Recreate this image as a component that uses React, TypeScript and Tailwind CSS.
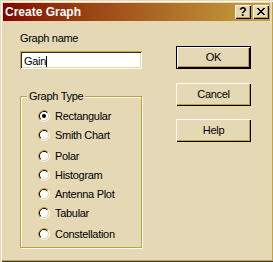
import React from 'react';

const face = 'bg-[#e4d8b5]';

function Radio({ checked }: { checked?: boolean }) {
  return (
    <svg width="12" height="12" viewBox="0 0 12 12" className="shrink-0">
      <circle cx="6" cy="6" r="5.5" fill="none" stroke="#fffbf0" />
      <path d="M2.11 9.89 A5.5 5.5 0 0 1 9.89 2.11" fill="none" stroke="#b8952f" />
      <circle cx="6" cy="6" r="4.5" fill="none" stroke="#e4d8b5" />
      <path d="M2.82 9.18 A4.5 4.5 0 0 1 9.18 2.82" fill="none" stroke="#000000" strokeWidth="1.2" />
      <circle cx="6" cy="6" r="3.9" fill="#ffffff" />
      {checked && <circle cx="6" cy="6" r="2" fill="#000000" />}
    </svg>
  );
}

function Button({ label, isDefault }: { label: string; isDefault?: boolean }) {
  const bevel =
    'shadow-[inset_1px_1px_0_#fffbf0,inset_-1px_-1px_0_#000000,inset_-2px_-2px_0_#c4a03c]';
  if (isDefault) {
    return (
      <div className="w-[75px] h-[23px] border border-black">
        <div className={`w-full h-full flex items-center justify-center ${bevel}`}>{label}</div>
      </div>
    );
  }
  return (
    <div className={`w-[75px] h-[23px] flex items-center justify-center ${bevel}`}>{label}</div>
  );
}

export default function App() {
  const types = [
    { name: 'Rectangular', mt: 'mt-0', checked: true },
    { name: 'Smith Chart', mt: 'mt-[7px]' },
    { name: 'Polar', mt: 'mt-[9px]' },
    { name: 'Histogram', mt: 'mt-[7px]' },
    { name: 'Antenna Plot', mt: 'mt-[7px]' },
    { name: 'Tabular', mt: 'mt-[7px]' },
    { name: 'Constellation', mt: 'mt-[9px]' },
  ];

  return (
    <div
      className={`w-[273px] h-[262px] ${face} p-[3px] flex flex-col text-black text-[11px] leading-[13px] tracking-[-0.3px] shadow-[inset_1px_1px_0_#e4d8b5,inset_2px_2px_0_#fffbf0,inset_0_-1px_0_#404040,inset_-1px_-2px_0_#c4a03c] overflow-hidden`}
      style={{ fontFamily: '"Liberation Sans", Arial, sans-serif' }}
    >
      {/* Title bar */}
      <div className="h-[18px] flex items-center justify-between pl-[2px] pr-[1px] bg-gradient-to-r from-[#800000] to-[#c6a440]">
        <span className="text-white font-bold text-[12px] leading-[18px] tracking-normal">Create Graph</span>
        <div className="flex gap-[2px]">
          <div
            className={`w-[16px] h-[14px] ${face} flex items-center justify-center font-bold text-[12px] leading-none tracking-normal shadow-[inset_1px_1px_0_#fffbf0,inset_-1px_-1px_0_#000000,inset_-2px_-2px_0_#c4a03c]`}
          >
            ?
          </div>
          <div
            className={`w-[16px] h-[14px] ${face} flex items-center justify-center shadow-[inset_1px_1px_0_#fffbf0,inset_-1px_-1px_0_#000000,inset_-2px_-2px_0_#c4a03c]`}
          >
            <svg width="8" height="7" viewBox="0 0 8 7" className="-mt-[1px] -ml-[1px]">
              <path d="M0 0 L7 7 M1 0 L8 7 M7 0 L0 7 M8 0 L1 7" stroke="#000" strokeWidth="1" />
            </svg>
          </div>
        </div>
      </div>

      {/* Client area */}
      <div className="flex pl-[17px]">
        <div className="w-[122px] flex flex-col pt-[11px]">
          <span>Graph name</span>
          <div className="mt-[6px] h-[18px] bg-white flex items-start pl-[4px] pt-[4px] shadow-[inset_1px_1px_0_#c4a03c,inset_-1px_-1px_0_#fffbf0,inset_2px_2px_0_#303030,inset_-2px_-2px_0_#e4d8b5]">
            <span>Gain</span>
            <span className="w-[1px] h-[11px] bg-black mt-[1px]" />
          </div>

          <div className="relative mt-[27px] h-[152px] border border-[#c4a03c] shadow-[1px_1px_0_#fffbf0,inset_1px_1px_0_#fffbf0] pl-[17px] pt-[13px] flex flex-col">
            <span className={`absolute left-[6px] -top-[7px] px-[2px] ${face}`}>Graph Type</span>
            {types.map((t) => (
              <div key={t.name} className={`flex items-center h-[12px] gap-[5px] ${t.mt}`}>
                <Radio checked={t.checked} />
                <span>{t.name}</span>
              </div>
            ))}
          </div>
        </div>

        <div className="ml-[34px] flex flex-col pt-[25px]">
          <Button label="OK" isDefault />
          <div className="mt-[14px]">
            <Button label="Cancel" />
          </div>
          <div className="mt-[13px]">
            <Button label="Help" />
          </div>
        </div>
      </div>
    </div>
  );
}
